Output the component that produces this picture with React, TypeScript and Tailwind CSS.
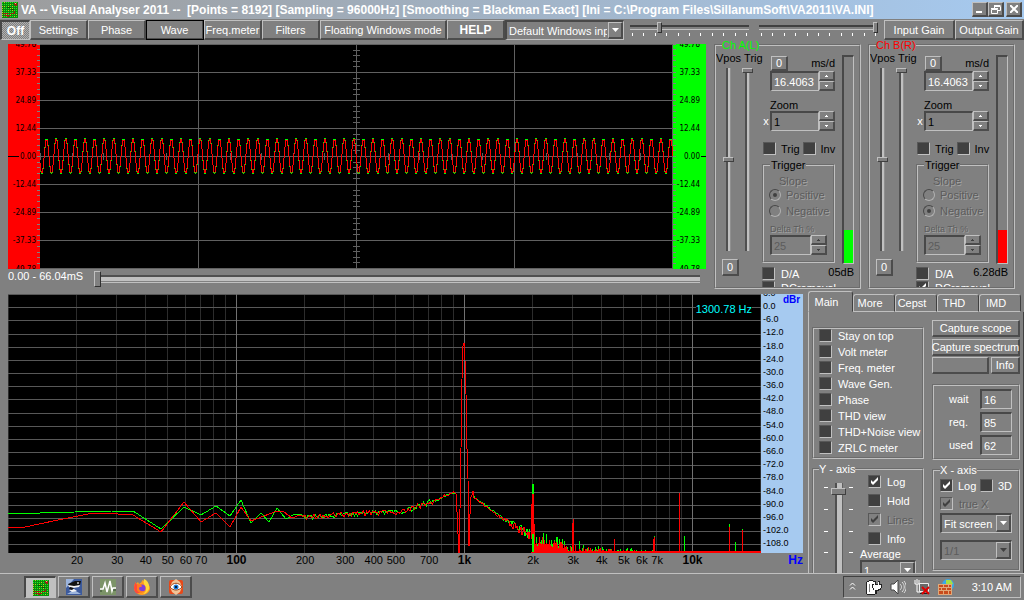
import React from "react";

const raised =
  "border-t border-l border-r-2 border-b-2 border-t-[#c0c0c0] border-l-[#c0c0c0] border-b-[#4c4c4c] border-r-[#4c4c4c] bg-[#808080]";
const sunken =
  "border-t-2 border-l-2 border-r border-b border-t-[#484848] border-l-[#484848] border-b-[#c0c0c0] border-r-[#c0c0c0]";
const group =
  "min-w-0 border-2 border-[#c0c0c0] [border-style:groove]";
const dim = "text-[#5c5c5c] [text-shadow:1px_1px_0_#a4a4a4]";

// small deterministic noise source so that the traces are stable
const noise = (n: number) => {
  const v = Math.sin(n * 127.1 + 311.7) * 43758.5453;
  return v - Math.floor(v);
};

type BtnProps = { className?: string; label?: string; children?: React.ReactNode };

const Btn = ({ className = "", label, children }: BtnProps) => (
  <button
    type="button"
    aria-label={label}
    className={`flex shrink-0 items-center justify-center whitespace-nowrap ${raised} ${className}`}
  >
    {children}
  </button>
);

type CheckProps = {
  label: string;
  checked?: boolean;
  disabled?: boolean;
  gap?: string;
  tone?: string;
};

const Check = ({ label, checked, disabled, gap = "gap-[6px]", tone = "" }: CheckProps) => (
  <label className={`flex h-[13px] items-center whitespace-nowrap ${gap} ${disabled ? dim : tone}`}>
    <span className="relative h-[13px] w-[13px] shrink-0">
      <input
        type="checkbox"
        defaultChecked={checked}
        disabled={disabled}
        className={`block h-[13px] w-[13px] appearance-none border border-t-[#585858] border-l-[#585858] border-b-[#c0c0c0] border-r-[#c0c0c0] ${
          disabled ? "bg-[#808080]" : "bg-[#404040]"
        }`}
      />
      {checked && (
        <svg viewBox="0 0 13 13" className="pointer-events-none absolute inset-0">
          <path d="M3 5v3l2 2 5-5V2L5 7z" fill={disabled ? "#404040" : "#fff"} />
        </svg>
      )}
    </span>
    {label}
  </label>
);

const Arrow = ({ up, dark }: { up?: boolean; dark?: boolean }) => (
  <svg width="3" height="2" viewBox="0 0 3 2" shapeRendering="crispEdges">
    <path d={up ? "M1 0h1v1h1v1H0V1h1z" : "M0 0h3v1H2v1H1V1H0z"} fill={dark ? "#404040" : "#fff"} />
  </svg>
);

type SpinProps = { label: string; value: string; disabled?: boolean; tone?: string };

const Spin = ({ label, value, disabled, tone = "text-white" }: SpinProps) => (
  <div className="flex h-5 min-w-0 flex-1">
    <input
      aria-label={label}
      defaultValue={value}
      disabled={disabled}
      className={`w-0 min-w-0 flex-1 pl-[2px] ${sunken} ${disabled ? "text-[#5c5c5c]" : tone}`}
    />
    <div className="flex w-4 flex-col">
      <Btn label={`${label} up`} className="h-[10px] w-4">
        <Arrow up dark={disabled} />
      </Btn>
      <Btn label={`${label} down`} className="h-[10px] w-4">
        <Arrow dark={disabled} />
      </Btn>
    </div>
  </div>
);

type DropProps = { label: string; value: string; disabled?: boolean; className?: string };

const Drop = ({ label, value, disabled, className = "" }: DropProps) => (
  <div className={`relative h-5 shrink-0 ${className}`}>
    <select
      aria-label={label}
      disabled={disabled}
      className={`block h-full w-full appearance-none bg-[#808080] pr-4 pl-[2px] ${sunken} ${
        disabled ? "text-[#5c5c5c]" : ""
      }`}
    >
      <option>{value}</option>
    </select>
    <span
      className={`pointer-events-none absolute top-[2px] right-px bottom-px flex w-[15px] items-center justify-center ${raised}`}
    >
      <svg width="7" height="4" viewBox="0 0 7 4">
        <path d="M0 0h7L3.500 4z" fill={disabled ? "#404040" : "#fff"} />
      </svg>
    </span>
  </div>
);

const vertical =
  "block appearance-none [writing-mode:vertical-lr] [direction:rtl] bg-center bg-no-repeat [&::-webkit-slider-thumb]:appearance-none [&::-webkit-slider-thumb]:border [&::-webkit-slider-thumb]:border-t-[#c0c0c0] [&::-webkit-slider-thumb]:border-l-[#c0c0c0] [&::-webkit-slider-thumb]:border-b-[#404040] [&::-webkit-slider-thumb]:border-r-[#404040] [&::-webkit-slider-thumb]:bg-[#808080]";

const VSlider = ({ label, value }: { label: string; value: number }) => (
  <input
    type="range"
    aria-label={label}
    defaultValue={value}
    className={`${vertical} h-[183px] w-[11px] bg-[linear-gradient(to_right,#505050_2px,#c0c0c0_2px,#c0c0c0_4px,#909090_4px)] bg-[length:5px_100%] [&::-webkit-slider-thumb]:h-[5px] [&::-webkit-slider-thumb]:w-[11px]`}
  />
);

const HSlider = ({ label, value }: { label: string; value: number }) => (
  <div className="min-w-0 flex-1">
    <input
      type="range"
      aria-label={label}
      defaultValue={value}
      className="mt-[2px] block h-[11px] w-full appearance-none bg-[linear-gradient(to_bottom,#404040_2px,#808080_2px,#808080_4px,#c0c0c0_4px)] bg-[length:100%_5px] bg-center bg-no-repeat [&::-webkit-slider-thumb]:h-[11px] [&::-webkit-slider-thumb]:w-[5px] [&::-webkit-slider-thumb]:appearance-none [&::-webkit-slider-thumb]:border [&::-webkit-slider-thumb]:border-t-[#c0c0c0] [&::-webkit-slider-thumb]:border-l-[#c0c0c0] [&::-webkit-slider-thumb]:border-b-[#303030] [&::-webkit-slider-thumb]:border-r-[#303030] [&::-webkit-slider-thumb]:bg-[#808080]"
    />
    <div className="flex justify-between px-[2px]">
      {Array.from({ length: 11 }, (_, i) => (
        <span key={i} className="h-[3px] w-px bg-white" />
      ))}
    </div>
  </div>
);

const VaIcon = () => (
  <svg width="16" height="16" viewBox="0 0 16 16" shapeRendering="crispEdges" aria-hidden="true">
    <rect width="16" height="16" fill="#0a8a0a" />
    {Array.from({ length: 64 }, (_, i) => (
      <rect
        key={i}
        x={(i % 8) * 2}
        y={Math.floor(i / 8) * 2}
        width="1"
        height="1"
        fill={noise(i) > 0.25 ? "#20f020" : "#c8c820"}
      />
    ))}
    <path d="M1 11h6v1H1zM9 11h3v1H9zM2 13h7v1H2zM12 1h3v3h-2V3h-1zM12 9h1v3h-1zM5 14h2v1H5z" fill="#a02010" />
    <path d="M13 1h1v1h-1z" fill="#ffb0a0" />
    <path d="M5 5h4v1H5zM9 7h3v1H9z" fill="#065806" />
  </svg>
);

const SCOPE_LABELS = ["49.78", "37.33", "24.89", "12.44", "0.00", "-12.44", "-24.89", "-37.33", "-49.78"];

const ScopeAxis = ({ right }: { right?: boolean }) => (
  <svg
    className={`h-full shrink-0 ${right ? "w-[33px] bg-[#00ff00]" : "w-8 bg-[#ff0000]"}`}
    fontSize="8"
    fontFamily="'DejaVu Sans Condensed', 'Liberation Sans', sans-serif"
  >
    {Array.from({ length: 41 }, (_, i) => (
      <line
        key={i}
        x1={right ? 0 : 29}
        x2={right ? 3 : 32}
        y1={`${i * 2.5}%`}
        y2={`${i * 2.5}%`}
        stroke="#808080"
        shapeRendering="crispEdges"
      />
    ))}
    <line x1={right ? 28 : 0} x2={right ? 33 : 11} y1="50%" y2="50%" stroke="#000" shapeRendering="crispEdges" />
    {SCOPE_LABELS.map((t, i) => (
      <text key={t} x={right ? 27 : 28} y={`${i * 12.5}%`} textAnchor="end" dominantBaseline="central">
        {t}
      </text>
    ))}
  </svg>
);

const sine = (amp: number) =>
  Array.from({ length: 634 }, (_, x) => {
    const y = 112 - amp * Math.sin(((x - 4.2) / 9.6) * Math.PI * 2);
    return `${x},${Math.round(y)}`;
  }).join(" ");

const Scope = () => (
  <div className="flex h-[225px]">
    <ScopeAxis />
    <svg
      viewBox="0 0 633 225"
      preserveAspectRatio="none"
      shapeRendering="crispEdges"
      className="h-full w-0 flex-1 bg-black"
      fill="none"
    >
      <g stroke="#606060">
        {SCOPE_LABELS.map((t, i) => (
          <path key={t} d={`M0 ${i * 28 + 0.5}H633`} />
        ))}
        {[158, 316, 474, 632].map((x) => (
          <path key={x} d={`M${x + 0.5} 0V225`} />
        ))}
        {Array.from({ length: 41 }, (_, i) => (
          <path key={i} d={`M313 ${Math.round(i * 5.6) + 0.5}h7`} />
        ))}
        {Array.from({ length: 21 }, (_, i) => (
          <path key={i} d={`M${Math.round(i * 31.6) + 0.5} 109v7`} />
        ))}
      </g>
      <polyline points={sine(18)} stroke="#00ff00" />
      <polyline points={sine(17)} stroke="#ff0000" />
    </svg>
    <ScopeAxis right />
  </div>
);

const fx = (f: number) => 228.5 + 228 * Math.log10(f / 100);

const FREQS: number[] = [];
[10, 100, 1000, 10000].forEach((d) => {
  for (let k = 1; k < 10; k++) if (k * d <= 20000) FREQS.push(k * d);
});

const GREEN_LOW =
  "0,219 32,219 67,218 104,217 125,217 153,235 176,213 193,221 208,212 222,222 233,206 243,229 253,219 261,228 269,214 278,225 285,221 292,220";
const RED_LOW =
  "0,233 17,233 50,226 85,219 110,220 125,221 153,238 176,208 193,228 208,219 222,233 233,213 243,227 269,217 276,218 284,224 292,221";

// base level of the skirts around the 1 kHz peak
const skirt = (x: number) => {
  if (x < 392) return 223 - (x - 292) * 0.06;
  if (x < 446) return 217 - ((x - 392) / 54) ** 1.3 * 19;
  return 202 + (x - 464) * 0.74 - Math.max(0, x - 500) * 0.18;
};

const PEAK =
  "448,200 449,218 450,240 451,259 452,215 453,155 454,85 455,52 456,49 457,66 458,100 459,155 460,185 461,252 462,220 463,203 464,201 465,197";

const buildTrace = (low: string, seed: number, bias: number) => {
  const pts = [low];
  for (let x = 294; x < 447; x += 1.5) {
    pts.push(`${x},${Math.round(skirt(x) + (noise(x + seed) - 0.5) * (x < 430 ? 5 : 2))}`);
  }
  pts.push(PEAK);
  for (let x = 466; x < 523; x += 1) {
    const spread = 2 + Math.max(0, x - 480) * 0.2;
    pts.push(`${x},${Math.round(skirt(x) + (noise(x + seed) - 0.5) * spread - bias)}`);
  }
  return pts.join(" ");
};

const GREEN_TRACE = buildTrace(GREEN_LOW, 3, 1);
const RED_TRACE = buildTrace(RED_LOW, 9, 0);

// noise floor drawn as vertical bars rising from the bottom edge
const buildFloor = (seed: number, gain: number) => {
  let d = "";
  for (let x = 526; x < 753; x++) {
    const env = x < 560 ? 19 - (x - 526) * 0.25 : 11 * Math.exp(-(x - 560) / 45) + 1;
    const n = noise(x * 1.7 + seed);
    const h = Math.max(2, Math.round(env * (x < 560 ? 0.35 + n * gain : n ** 2 * gain * 1.4)));
    d += `M${x + 0.5} 259v-${h}`;
  }
  return d;
};

const GREEN_FLOOR =
  buildFloor(5, 0.9) + "M524.5 259V190M525.5 259V190M646.5 259v-17M676.5 259v-17M721.5 259v-29M734.5 259v-24M727.500 259v-11";
const RED_FLOOR =
  buildFloor(17, 0.6) +
  "M523.5 245V210M524.5 240V200M525.5 240V200M526.5 259V230M564.5 259v-30M565.5 259v-34M606.5 259v-14M645.5 259v-14M646.5 259v-16M671.5 259v-60M721.5 259v-26M734.5 259v-23";

const Spectrum = () => (
  <svg
    viewBox="0 0 753 259"
    preserveAspectRatio="none"
    shapeRendering="crispEdges"
    className="h-full w-full bg-black"
    fill="none"
  >
    {FREQS.map((f) => (
      <path key={f} d={`M${Math.round(fx(f)) - 0.5} 0V259`} stroke="#2c2c2c" />
    ))}
    <g stroke="#585858">
      {Array.from({ length: 20 }, (_, i) => (
        <path key={i} d={`M0 ${Math.round(i * 13.17) + 0.5}H753`} />
      ))}
    </g>
    <g stroke="#707070">
      {[100, 1000, 10000].map((f) => (
        <path key={f} d={`M${Math.round(fx(f)) - 0.5} 0V259`} />
      ))}
    </g>
    <path d={GREEN_FLOOR} stroke="#00ff00" />
    <path d={RED_FLOOR} stroke="#ff0000" />
    <polyline points={GREEN_TRACE} stroke="#00ff00" />
    <polyline points={RED_TRACE} stroke="#ff0000" />
    <path d="M523 258.500H753" stroke="#ff0000" />
  </svg>
);

const FREQ_LABELS: [number, string][] = [
  [20, "20"], [30, "30"], [40, "40"], [50, "50"], [60, "60"], [70, "70"], [100, "100"],
  [200, "200"], [300, "300"], [400, "400"], [500, "500"], [700, "700"], [1000, "1k"],
  [2000, "2k"], [3000, "3k"], [4000, "4k"], [5000, "5k"], [6000, "6k"], [7000, "7k"], [10000, "10k"],
];

const SpectrumPanel = () => (
  <div className="flex min-w-0 flex-1 flex-col pt-1">
    <div className="flex min-h-0 flex-1">
      <div className="relative min-w-0 flex-1">
        <div className="absolute inset-0">
          <Spectrum />
        </div>
        <span className="absolute top-2 right-[9px] bg-black leading-[14px] text-[#00ffff]">
          1300.78 Hz
        </span>
      </div>
      <svg className="h-full w-[42px] shrink-0 bg-[#a6caf0]" fontSize="9">
        {Array.from({ length: 20 }, (_, i) => (
          <text key={i} x="2" y={`${-0.4 + i * 5.085}%`} dominantBaseline="central">
            {i === 0 ? "6.0" : ((1 - i) * 6).toFixed(1)}
          </text>
        ))}
        <text x="22" y="9" fontWeight="bold" fontSize="10" fill="#0000ff">
          dBr
        </text>
      </svg>
    </div>
    <div className="flex h-5 shrink-0 text-black">
      <svg className="h-5 w-0 flex-1" fontSize="11">
        {FREQ_LABELS.map(([f, t]) => {
          const decade = [100, 1000, 10000].includes(f);
          return (
            <text
              key={f}
              x={`${(fx(f) / 753) * 100}%`}
              y="11"
              textAnchor="middle"
              fontSize={decade ? 12 : 11}
              fontWeight={decade ? "bold" : "normal"}
            >
              {t}
            </text>
          );
        })}
      </svg>
      <span className="w-[42px] text-right text-[12px] leading-[14px] font-bold text-[#0000ff]">Hz</span>
    </div>
  </div>
);

type ChannelProps = {
  name: string;
  color: string;
  bar: string;
  db: string;
  positive: boolean;
  dc: boolean;
};

const Radio = ({ name, label, checked }: { name: string; label: string; checked: boolean }) => (
  <label className={`flex h-4 items-center gap-[5px] pl-[5px] ${dim}`}>
    <span className="relative h-3 w-3 shrink-0">
      <input
        type="radio"
        name={name}
        disabled
        defaultChecked={checked}
        className="block h-3 w-3 appearance-none rounded-full border border-t-[#484848] border-l-[#484848] border-r-[#b0b0b0] border-b-[#b0b0b0]"
      />
      {checked && <span className="absolute top-1 left-1 h-1 w-1 rounded-full bg-[#404040]" />}
    </span>
    {label}
  </label>
);

const Channel = ({ name, color, bar, db, positive, dc }: ChannelProps) => (
  <fieldset className={`h-[249px] w-[147px] shrink-0 overflow-hidden ${group}`}>
    <legend className={`ml-[6px] h-[10px] text-[11px] leading-[10px] ${color}`}>{name}</legend>
    <div className="flex">
      <div className="w-[46px] shrink-0 text-black">
        <div className="flex h-[14px] items-center gap-[3px] pt-[2px]">
          <span>Vpos</span>
          <span>Trig</span>
        </div>
        <div className="mt-1 flex gap-2 pl-[7px]">
          <VSlider label={`${name} Vpos`} value={50} />
          <VSlider label={`${name} Trig level`} value={100} />
        </div>
        <Btn className="mt-[8px] ml-[6px] h-[17px] w-[17px] text-white">0</Btn>
      </div>
      <div className="w-[73px] shrink-0">
        <div className="mt-[5px] flex h-4 items-center justify-between pl-[9px] text-black">
          <Btn className="h-[15px] w-[17px] text-white">0</Btn>
          ms/d
        </div>
        <div className="flex pl-2">
          <Spin label={`${name} ms/d`} value="16.4063" />
        </div>
        <div className="mt-2 pl-2 leading-3 text-black">Zoom</div>
        <div className="flex items-center">
          <span className="w-2 text-center">x</span>
          <Spin label={`${name} Zoom`} value="1" tone="text-black" />
        </div>
        <div className="mt-[11px] flex gap-[3px] pl-px">
          <Check label="Trig" gap="gap-[5px]" tone="text-black" />
          <Check label="Inv" gap="gap-[5px]" tone="text-black" />
        </div>
        <fieldset className={`mt-[4px] h-[104px] ${group}`}>
          <legend className="ml-[6px] h-3 px-px leading-3 text-black">Trigger</legend>
          <div className={`mt-1 pl-[15px] leading-3 ${dim}`}>Slope</div>
          <Radio name={name} label="Positive" checked={positive} />
          <Radio name={name} label="Negative" checked={!positive} />
          <div className={`mt-1 pl-[6px] text-[9px] leading-3 ${dim}`}>Delta Th %</div>
          <div className="flex pr-[6px] pl-[6px]">
            <Spin label={`${name} Delta Th`} value="25" disabled />
          </div>
        </fieldset>
        <div className="mt-1">
          <Check label="D/A" />
        </div>
        <div className="mt-px">
          <Check label="DCremoval" checked={dc} />
        </div>
      </div>
      <div className="mt-[5px] ml-[7px] w-3 shrink-0">
        <div className={`flex h-[209px] items-end ${sunken}`}>
          <div className={`h-[33px] w-full ${bar}`} />
        </div>
        <div className="flex h-4 justify-end leading-4 whitespace-nowrap text-black">{db}</div>
      </div>
    </div>
  </fieldset>
);

const Toolbar = () => (
  <div className="mt-px flex h-5 shrink-0">
    <button
      type="button"
      className={`w-[30px] shrink-0 bg-[repeating-conic-gradient(#808080_0_25%,#b0b0b0_0_50%)] bg-[length:2px_2px] text-[12px] font-bold ${sunken}`}
    >
      Off
    </button>
    <Btn className="w-[58px]">Settings</Btn>
    <Btn className="w-[58px]">Phase</Btn>
    <Btn className="w-[58px] outline outline-black -outline-offset-1">Wave</Btn>
    <Btn className="w-[58px]">Freq.meter</Btn>
    <Btn className="w-[58px]">Filters</Btn>
    <Btn className="w-[127px]">Floating Windows mode</Btn>
    <Btn className="w-[58px] text-[12px] font-bold">HELP</Btn>
    <Drop label="Input device" value="Default Windows input" className="w-[119px]" />
    <div className="flex min-w-0 flex-1 gap-[10px] px-[6px]">
      <HSlider label="Left gain" value={24} />
      <HSlider label="Right gain" value={100} />
    </div>
    <Btn className="w-[71px]">Input Gain</Btn>
    <Btn className="w-[69px]">Output Gain</Btn>
  </div>
);

const VIEWS = ["Stay on top", "Volt meter", "Freq. meter", "Wave Gen.", "Phase", "THD view", "THD+Noise view", "ZRLC meter"];

const Ticks = () => (
  <div className="flex h-[92px] flex-col justify-between pt-1">
    {[0, 1, 2, 3, 4].map((i) => (
      <span key={i} className="h-px w-1 bg-white" />
    ))}
  </div>
);

const SidePanel = () => (
  <div className="flex w-[216px] shrink-0 flex-col pt-px">
    <div className="flex shrink-0 items-end" role="tablist">
      <button
        type="button"
        role="tab"
        aria-selected="true"
        className="h-[21px] w-[45px] rounded-t-[3px] border border-t-[#c0c0c0] border-r-[#404040] border-b-transparent border-l-[#c0c0c0] pr-2"
      >
        Main
      </button>
      {["More", "Cepst", "THD", "IMD"].map((t) => (
        <button
          key={t}
          type="button"
          role="tab"
          aria-selected="false"
          className="h-[18px] w-[42px] rounded-t-[3px] border border-t-[#c0c0c0] border-r-[#404040] border-b-[#c0c0c0] border-l-[#c0c0c0] pr-2"
        >
          {t}
        </button>
      ))}
    </div>
    <div className="flex min-h-0 flex-1 gap-2 overflow-hidden border-r border-l border-r-[#404040] border-l-[#c0c0c0] pl-[3px]">
      <div className="w-[112px] shrink-0">
        <div className={`mt-[15px] flex h-[132px] flex-col gap-[3px] pl-[5px] ${group}`}>
          {VIEWS.map((v) => (
            <Check key={v} label={v} />
          ))}
        </div>
        <fieldset className={`mt-1 h-[120px] ${group}`}>
          <legend className="ml-[5px] h-3 leading-3">Y - axis</legend>
          <div className="flex">
            <div className="flex w-[46px] shrink-0 gap-[3px] pt-2 pl-[10px]">
              <Ticks />
              <input
                type="range"
                aria-label="Y axis range"
                defaultValue={95}
                className={`${vertical} h-[100px] w-[15px] bg-[linear-gradient(to_right,#505050_2px,#c0c0c0_2px,#c0c0c0_7px,#606060_7px)] bg-[length:8px_100%] [&::-webkit-slider-thumb]:h-[7px] [&::-webkit-slider-thumb]:w-[15px]`}
              />
              <Ticks />
            </div>
            <div className="flex flex-col gap-[6px] pl-2">
              <Check label="Log" checked />
              <Check label="Hold" />
              <Check label="Lines" checked disabled />
              <Check label="Info" />
            </div>
          </div>
          <div className="-mt-[35px] ml-[46px] leading-3">Average</div>
          <div className="ml-[46px]">
            <Drop label="Average" value="1" className="w-[56px]" />
          </div>
        </fieldset>
      </div>
      <div className="w-[88px] shrink-0">
        <Btn className="mt-2 h-[17px] w-full">Capture scope</Btn>
        <Btn className="mt-[2px] h-[17px] w-full">Capture spectrum</Btn>
        <div className="mt-px flex justify-between">
          <Btn label="Status" className="h-[17px] w-[57px]" />
          <Btn className="h-[17px] w-[29px]">Info</Btn>
        </div>
        <div className={`mt-[10px] flex h-[76px] flex-col justify-center gap-[3px] pr-[6px] ${group}`}>
          {[["wait", "16"], ["req.", "85"], ["used", "62"]].map(([k, v]) => (
            <label key={k} className="flex h-5 items-center justify-between pl-[15px]">
              {k}
              <input defaultValue={v} className={`h-5 w-8 pl-[2px] ${sunken}`} />
            </label>
          ))}
        </div>
        <fieldset className={`mt-1 h-[107px] pr-[6px] pl-[6px] ${group}`}>
          <legend className="h-3 leading-3">X - axis</legend>
          <div className="mt-[3px] flex justify-between">
            <Check label="Log" checked gap="gap-[5px]" />
            <Check label="3D" gap="gap-[5px]" />
          </div>
          <div className="mt-[5px]">
            <Check label="true X" checked disabled />
          </div>
          <Drop label="Fit" value="Fit screen" className="mt-[3px] w-full" />
          <Drop label="Ratio" value="1/1" disabled className="mt-[7px] w-full" />
        </fieldset>
      </div>
    </div>
  </div>
);

const Taskbar = () => (
  <div className="flex h-[27px] shrink-0 items-center justify-between border-t border-[#c0c0c0] pr-[3px] pl-6">
    <div className="flex gap-[2px]">
      <button
        type="button"
        aria-label="Visual Analyser"
        className={`flex h-[22px] w-8 items-center justify-center bg-[#c0c0c0] ${sunken}`}
      >
        <VaIcon />
      </button>
      <Btn label="Mixer" className="h-[22px] w-8">
        <svg width="16" height="16" viewBox="0 0 16 16">
          <rect width="16" height="16" fill="#3c5a9c" />
          <path d="M0 0h8L0 9zM1 15l7-4 7 4z" fill="#9cb4dc" />
          <path d="M2 5l7-3h6l-1 4-5 2-6-1z" fill="#111" />
          <path d="M2 6l6 1 6-1-1 2-6 1-4-1zM3 11l5-1 3 2-5 1z" fill="#f4f4f4" />
          <path d="M4 8l4 1-2 2-3-1z" fill="#111" />
          <circle cx="12" cy="4" r="1" fill="#ccc" />
        </svg>
      </Btn>
      <Btn label="Signal monitor" className="h-[22px] w-8">
        <svg width="16" height="16" viewBox="0 0 16 16">
          <rect width="16" height="16" fill="#7c9468" />
          <path d="M0 10h3l2-6 2 9 3-11 2 10 1-3h3" fill="none" stroke="#fff" strokeWidth="1.500" />
          <path d="M0 12h2M13 11h3" stroke="#2c4428" />
        </svg>
      </Btn>
      <Btn label="Firefox" className="h-[22px] w-8">
        <svg width="16" height="16" viewBox="0 0 16 16">
          <path d="M8 1c2 1 3 2 3 3l1-1c2 2 4 4 4 6 0 4-4 7-8 7s-8-3-8-7c0-3 1-5 2-6v2l2-2 1 2c1-1 3-1 3-4z" fill="#ff9a20" />
          <path d="M10 0c3 1 6 5 5 10-1 3-4 5-6 5 3-2 4-5 2-8-1-2-2-4-1-7z" fill="#ffd83a" />
          <path d="M0 9c0-3 1-5 2-6v2l3 1 2 7c-2 1-4 2-5 1s-2-3-2-5z" fill="#ff4a3a" />
          <circle cx="8" cy="9" r="3.500" fill="#8040d8" />
          <path d="M3 6c2-1 4-1 5 1-1 2-2 0-3 2 0 2 2 4 5 3-2 3-6 2-7-1z" fill="#ff7a20" />
        </svg>
      </Btn>
      <Btn label="Image viewer" className="h-[22px] w-8">
        <svg width="16" height="16" viewBox="0 0 16 16">
          <rect x="1" y="1" width="14" height="14" rx="2" fill="#e84818" />
          <path d="M8 0l4 3 2 5-2 5-4 3-4-3-2-5 2-5z" fill="#f0c498" />
          <path d="M2 8c3-5 9-5 12 0-3 4-9 4-12 0z" fill="#fff" stroke="#a04818" />
          <circle cx="8" cy="8" r="2.500" fill="#1878d8" />
          <circle cx="8" cy="8" r="1" fill="#000" />
        </svg>
      </Btn>
    </div>
    <div className="flex h-[22px] w-[178px] items-center border border-t-[#404040] border-r-[#c0c0c0] border-b-[#c0c0c0] border-l-[#404040] pr-2 pl-[5px]">
      <svg width="7" height="8" viewBox="0 0 7 8" fill="none" stroke="#fff" className="mb-[3px]">
        <path d="M1 3.500L3.500 1 6 3.500M1 7.500L3.500 5 6 7.500" />
      </svg>
      <div className="flex flex-1 gap-[8px] pl-[10px]">
        <svg width="16" height="16" viewBox="0 0 16 16" shapeRendering="crispEdges">
          <path d="M1 2h8v13H1z" fill="#fff" />
          <path d="M1 2h2v1H1zM7 2h2v1H7zM3 1h4v1H3zM0 3h1v12H0zM1 15h8v1H1z" fill="#222" />
          <path d="M3 5h1v8H3z" fill="#808080" />
          <path d="M8 2h2v4H8zM12 2h2v4h-2zM6 5h10v4h-1v2h-2v1h-2v3H9v-4H7V9H6z" fill="#222" />
          <path d="M7 6h8v3h-1v1h-2v1h-2v3h0v-3H8V9H7zM8 3h1v3H8zM12 3h1v3h-1z" fill="#fff" />
        </svg>
        <svg width="16" height="16" viewBox="0 0 16 16">
          <path d="M1 5h3l4-4v14l-4-4H1z" fill="#fff" stroke="#444" />
          <path d="M10 5c2 2 2 4 0 6M12 3c3 3 3 7 0 10M14 2c3 4 3 8 0 12" fill="none" stroke="#ddd" />
        </svg>
        <svg width="16" height="16" viewBox="0 0 16 16">
          <path d="M5.500 4.500h9v8h-9z" fill="#686868" stroke="#eee" />
          <path d="M1 1v4h4V1M3 0v4M3 5v8h4" fill="none" stroke="#fff" />
          <path d="M6 14.500h8" stroke="#222" />
          <path d="M8 8l7 7M15 8l-7 7" stroke="#e00000" strokeWidth="2" />
        </svg>
        <svg width="16" height="16" viewBox="0 0 16 16">
          <circle cx="10" cy="6" r="6" fill="#38a8e8" />
          <path d="M8 1l5 0 2 4-4 2-3-2z" fill="#a8e040" />
          <rect y="5" width="14" height="11" fill="#e0a878" />
          <path d="M1 6h4v2H1zM6 6h4v2H6zM11 6h2v2h-2zM1 9h2v2H1zM4 9h4v2H4zM9 9h4v2H9zM1 12h4v3H1zM6 12h4v3H6zM11 12h2v3h-2z" fill="#c84c1c" />
        </svg>
      </div>
      <span>3:10 AM</span>
    </div>
  </div>
);

const App = () => (
  <div className="flex h-screen w-full flex-col overflow-hidden bg-[#808080] font-['Liberation_Sans',Arial,sans-serif] text-[11px] leading-[14px] text-white">
    <header className="flex h-[19px] shrink-0 items-center bg-linear-to-r from-[#9c9c9c] to-[#a6caf0] pr-[2px] pl-[2px]">
      <VaIcon />
      <h1 className="ml-[3px] min-w-0 flex-1 overflow-hidden text-[12px] font-bold whitespace-pre">
        VA -- Visual Analyser 2011 --  [Points = 8192] [Sampling = 96000Hz] [Smoothing = Blackman Exact] [Ini = C:\Program Files\SillanumSoft\VA2011\VA.INI]
      </h1>
      <Btn label="Minimize" className="h-[15px] w-4">
        <svg width="8" height="8" viewBox="0 0 8 8">
          <path d="M0 6h6v2H0z" fill="#fff" />
        </svg>
      </Btn>
      <Btn label="Restore" className="h-[15px] w-4">
        <svg width="10" height="9" viewBox="0 0 10 9" fill="none" stroke="#fff">
          <path d="M3 .5h6.500M3 1.500h6.500v4H7M3.500 1v2M.5 4.500h6v4h-6zM0 3.500h7" />
        </svg>
      </Btn>
      <Btn label="Close" className="ml-[2px] h-[15px] w-4">
        <svg width="8" height="8" viewBox="0 0 8 8">
          <path d="M0 0l8 8M8 0L0 8" stroke="#fff" strokeWidth="2" />
        </svg>
      </Btn>
    </header>
    <Toolbar />
    <main className="flex min-h-0 flex-1 flex-col">
      <div className="flex h-[250px] shrink-0 pr-[9px] pl-2">
        <div className="min-w-0 flex-1 pt-1">
          <Scope />
          <div className="flex items-start pr-[6px]">
            <span className="w-[86px]">0.00 - 66.04mS</span>
            <input
              type="range"
              aria-label="Time position"
              defaultValue={0}
              className="mt-[2px] h-4 w-0 flex-1 appearance-none bg-[linear-gradient(to_bottom,#505050_2px,#c0c0c0_2px,#c0c0c0_6px,#808080_6px,#808080_7px,#c0c0c0_7px)] bg-[length:100%_8px] bg-center bg-no-repeat [&::-webkit-slider-thumb]:h-4 [&::-webkit-slider-thumb]:w-[7px] [&::-webkit-slider-thumb]:appearance-none [&::-webkit-slider-thumb]:border [&::-webkit-slider-thumb]:border-t-[#c0c0c0] [&::-webkit-slider-thumb]:border-l-[#c0c0c0] [&::-webkit-slider-thumb]:border-b-[#303030] [&::-webkit-slider-thumb]:border-r-[#303030] [&::-webkit-slider-thumb]:bg-[#808080]"
            />
          </div>
        </div>
        <div className="flex shrink-0 gap-[7px] pl-2">
          <Channel name="Ch A(L)" color="text-[#00ff00]" bar="bg-[#00ff00]" db="05dB" positive dc={false} />
          <Channel name="Ch B(R)" color="text-[#ff0000]" bar="bg-[#ff0000]" db="6.28dB" positive={false} dc />
        </div>
      </div>
      <div className="flex min-h-0 flex-1 gap-[5px] overflow-hidden pl-2">
        <SpectrumPanel />
        <SidePanel />
      </div>
    </main>
    <Taskbar />
  </div>
);

export default App;
